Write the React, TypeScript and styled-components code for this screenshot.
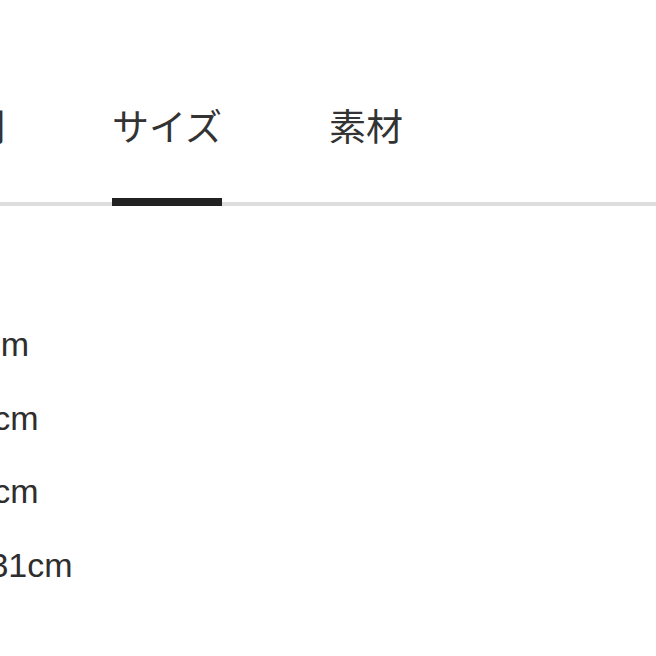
import React, { useState } from 'react';
import styled, { createGlobalStyle } from 'styled-components';

const GlobalStyle = createGlobalStyle`
    html, body {
        margin: 0;
        padding: 0;
        background: #fff;
    }
    body {
        font-family: "Liberation Sans", "Noto Sans CJK JP", sans-serif;
        color: #333;
    }
`;

const Page = styled.div`
    width: 656px;
    height: 656px;
    overflow: hidden;
    background: #fff;
`;

// the product detail panel is wider than the viewport, it starts off to the left
const Panel = styled.div`
    margin-left: -156px;
    width: 820px;
`;

const TabBar = styled.div`
    display: flex;
    gap: 107px;
    padding-left: 87px;
    border-bottom: 4px solid #dddddd;
`;

const Tab = styled.button<{ $active?: boolean }>`
    appearance: none;
    background: none;
    border: 0;
    border-bottom: 8px solid ${p => (p.$active ? '#222' : 'transparent')};
    margin: 0 0 -4px;
    padding: 98px 0 46px;
    font-family: "Noto Sans CJK JP", "Liberation Sans", sans-serif;
    font-size: 37px;
    line-height: 54px;
    color: #333;
    white-space: nowrap;
    cursor: pointer;
`;

const SpecList = styled.ul`
    list-style: none;
    margin: 0;
    padding: 102px 0 0;
`;

const SpecRow = styled.li`
    height: 73.5px;
    font-size: 34px;
    line-height: 73.5px;
    color: #2e2e2e;
    white-space: nowrap;
    overflow: hidden;
`;

const tabs = [ '説明', 'サイズ', '素材' ];

const specs = [
    { label: '高さ', value: '24cm' },
    { label: 'マチ', value: '9.5cm' },
    { label: '厚み', value: '8.5cm' },
    { label: '持ち手', value: ' 31cm' },
];

export default () => {
    const [ active, setActive ] = useState(1);

    return (
        <Page>
            <GlobalStyle/>
            <Panel>
                <TabBar>
                    {tabs.map((name, i) => (
                        <Tab key={name} $active={i === active} onClick={() => setActive(i)}>
                            {name}
                        </Tab>
                    ))}
                </TabBar>
                <SpecList>
                    {specs.map(s => (
                        <SpecRow key={s.label}>{s.label}：{s.value}</SpecRow>
                    ))}
                </SpecList>
            </Panel>
        </Page>
    );
};
